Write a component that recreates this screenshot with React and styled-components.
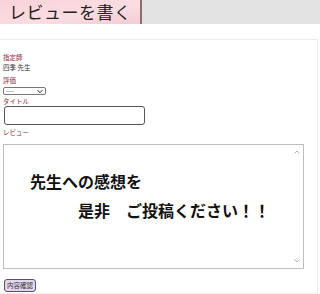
import React from "react";
import styled, { createGlobalStyle } from "styled-components";

const Global = createGlobalStyle`
  body {
    margin: 0;
    background: #fff;
    font-family: "Noto Sans CJK JP", "Noto Sans", sans-serif;
  }
`;

const Header = styled.div`
  display: flex;
  height: 24px;
`;

const Title = styled.h1`
  margin: 0;
  width: 140px;
  box-sizing: border-box;
  padding-left: 9px;
  background: linear-gradient(170deg, #fbd2da 0%, #fadde2 60%, #f5cbd3 100%);
  font-family: "Noto Sans CJK JP", serif;
  font-weight: 400;
  font-size: 17px;
  line-height: 24px;
  color: #222;
  letter-spacing: 0.5px;
`;

const Divider = styled.div`
  width: 2px;
  background: #8c6c72;
`;

const Filler = styled.div`
  flex: 1;
  background: #e3e3e3;
`;

const Panel = styled.div`
  margin: 15px 2px 0 0;
  border: 1px solid #ececec;
  border-left: none;
  padding: 12px 0 1px 3px;
`;

const Label = styled.div`
  font-size: 6.5px;
  line-height: 10px;
  margin-top: ${(p) => p.$gap || 0}px;
  color: ${(p) => (p.$plain ? "#333" : "#8a2a3a")};
`;

const SelectWrap = styled.div`
  position: relative;
  width: 43px;
  height: 8px;
  margin-top: 2px;
`;

const Select = styled.select`
  display: block;
  appearance: none;
  width: 43px;
  height: 8px;
  box-sizing: border-box;
  margin: 0;
  padding: 0 0 0 2px;
  font-family: "Liberation Sans", sans-serif;
  font-size: 6px;
  line-height: 6px;
  color: #444;
  border: 1px solid #777;
  border-radius: 2px;
  background: #fff;
  overflow: visible;
`;

const Chevron = styled.svg`
  position: absolute;
  right: 3px;
  top: 1.5px;
  width: 6px;
  height: 5px;
  pointer-events: none;
`;

const Input = styled.input`
  display: block;
  width: 141px;
  height: 19px;
  box-sizing: border-box;
  margin: 0 0 0 1px;
  border: 1px solid #555;
  border-radius: 3px;
`;

const AreaWrap = styled.div`
  position: relative;
  width: 301px;
  margin-top: 7px;
`;

const Area = styled.textarea`
  display: block;
  width: 301px;
  height: 125px;
  box-sizing: border-box;
  margin: 0;
  padding: 22px 26px;
  border: 1px solid #bdbdbd;
  border-radius: 0;
  resize: none;
  overflow-y: scroll;
  font-family: "Noto Sans CJK JP", sans-serif;
  font-weight: 700;
  font-size: 16px;
  line-height: 29px;
  color: #111;

  &::placeholder {
    color: #111;
    opacity: 1;
  }
  &::-webkit-scrollbar {
    width: 12px;
  }
  &::-webkit-scrollbar-track {
    background: #fbfbfb;
  }
`;

const ScrollArrow = styled.svg`
  position: absolute;
  right: 4px;
  ${(p) => (p.$down ? "bottom: 6px;" : "top: 6px;")}
  width: 6px;
  height: 4px;
  pointer-events: none;
`;

const Button = styled.button`
  display: block;
  height: 13px;
  margin: 10px 0 0 1px;
  padding: 0 2px;
  font-family: "Noto Sans CJK JP", sans-serif;
  font-size: 6.5px;
  line-height: 11px;
  color: #333;
  background: #e4d6ee;
  border: 1px solid #555;
  border-radius: 3px;
`;

export default function App() {
  return (
    <>
      <Global />
      <Header>
        <Title>レビューを書く</Title>
        <Divider />
        <Filler />
      </Header>
      <Panel>
        <Label>指定師</Label>
        <Label $plain>四季 先生</Label>
        <Label $gap={3}>評価</Label>
        <SelectWrap>
          <Select defaultValue="">
            <option value="">----</option>
          </Select>
          <Chevron viewBox="0 0 6 5">
            <path d="M0.5 1 L3 3.8 L5.5 1" fill="none" stroke="#333" strokeWidth="1" />
          </Chevron>
        </SelectWrap>
        <Label $gap={1}>タイトル</Label>
        <Input type="text" />
        <Label $gap={2}>レビュー</Label>
        <AreaWrap>
          <Area
            placeholder={"先生への感想を\n　　　是非　ご投稿ください！！"}
          />
          <ScrollArrow viewBox="0 0 6 4">
            <path d="M0.5 3.5 L3 1 L5.5 3.5" fill="none" stroke="#aaa" strokeWidth="0.9" />
          </ScrollArrow>
          <ScrollArrow $down viewBox="0 0 6 4">
            <path d="M0.5 0.5 L3 3 L5.5 0.5" fill="none" stroke="#aaa" strokeWidth="0.9" />
          </ScrollArrow>
        </AreaWrap>
        <Button>内容確認</Button>
      </Panel>
    </>
  );
}
